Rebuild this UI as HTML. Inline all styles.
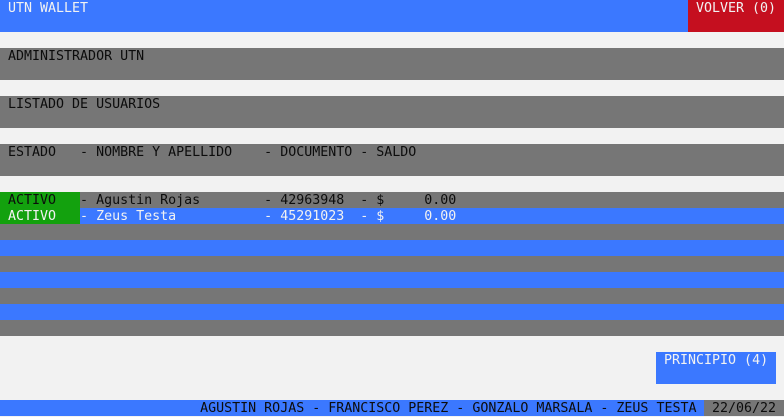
<!DOCTYPE html>
<html><head><meta charset="utf-8"><style>
*{margin:0;padding:0;box-sizing:border-box}
body{width:784px;height:416px;background:#f2f2f2;position:relative;overflow:hidden;font-family:"DejaVu Sans Mono","Liberation Mono",monospace;font-size:13.3px;line-height:16px}
.b{position:absolute;white-space:pre;color:#0c0c0c;padding-top:1px}
.bl{background:#3b78ff;color:#f2f2f2}
.gr{background:#767676}
.gn{background:#13a10e}
.rd{background:#c50f1f;color:#f2f2f2}
</style></head><body>
<div class="b bl" style="left:0;top:0;width:688px;height:32px"> UTN WALLET</div>
<div class="b rd" style="left:688px;top:0;width:96px;height:32px"> VOLVER (0)</div>
<div class="b gr" style="left:0;top:48px;width:784px;height:32px"> ADMINISTRADOR UTN</div>
<div class="b gr" style="left:0;top:96px;width:784px;height:32px"> LISTADO DE USUARIOS</div>
<div class="b gr" style="left:0;top:144px;width:784px;height:32px"> ESTADO   - NOMBRE Y APELLIDO    - DOCUMENTO - SALDO</div>
<div class="b gr" style="left:0;top:192px;width:784px;height:16px">          - Agustin Rojas        - 42963948  - $     0.00</div>
<div class="b gn" style="left:0;top:192px;width:80px;height:16px"> ACTIVO</div>
<div class="b bl" style="left:0;top:208px;width:784px;height:16px">          - Zeus Testa           - 45291023  - $     0.00</div>
<div class="b gn" style="left:0;top:208px;width:80px;height:16px;color:#f2f2f2"> ACTIVO</div>
<div class="b gr" style="left:0;top:224px;width:784px;height:16px"></div>
<div class="b bl" style="left:0;top:240px;width:784px;height:16px"></div>
<div class="b gr" style="left:0;top:256px;width:784px;height:16px"></div>
<div class="b bl" style="left:0;top:272px;width:784px;height:16px"></div>
<div class="b gr" style="left:0;top:288px;width:784px;height:16px"></div>
<div class="b bl" style="left:0;top:304px;width:784px;height:16px"></div>
<div class="b gr" style="left:0;top:320px;width:784px;height:16px"></div>
<div class="b bl" style="left:656px;top:352px;width:120px;height:32px"> PRINCIPIO (4)</div>
<div class="b bl" style="left:0;top:400px;width:704px;height:16px;color:#0c0c0c">                         AGUSTIN ROJAS - FRANCISCO PEREZ - GONZALO MARSALA - ZEUS TESTA </div>
<div class="b gr" style="left:704px;top:400px;width:80px;height:16px"> 22/06/22</div>
</body></html>
